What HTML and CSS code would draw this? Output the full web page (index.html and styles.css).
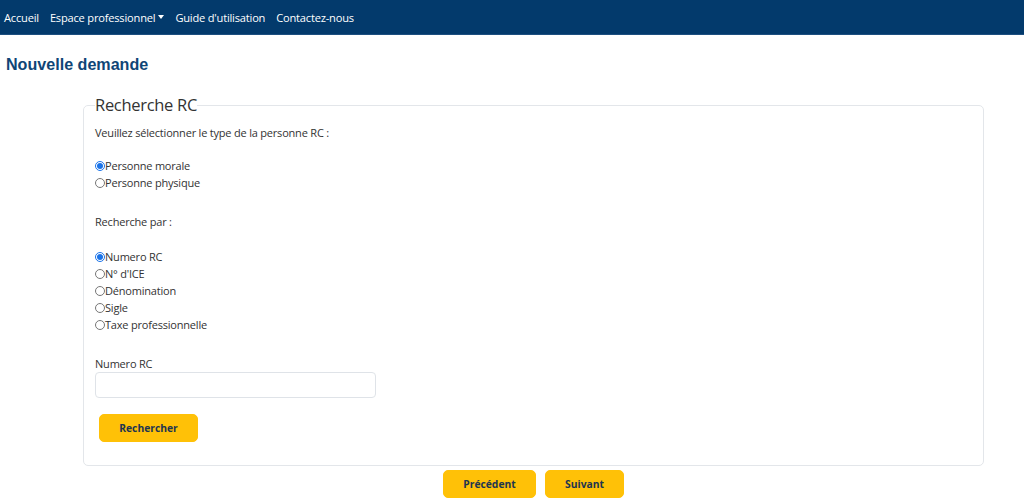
FILE: index.html
```html
<!DOCTYPE html>
<html lang="fr">
<head>
<meta charset="utf-8">
<title>Nouvelle demande</title>
<link rel="stylesheet" href="styles.css">
</head>
<body>
<nav class="navbar">
  <a class="nav-link" href="#">Accueil</a>
  <a class="nav-link" href="#">Espace professionnel<span class="caret"></span></a>
  <a class="nav-link" href="#">Guide d'utilisation</a>
  <a class="nav-link" href="#">Contactez-nous</a>
</nav>
<h1 class="page-title">Nouvelle demande</h1>
<main class="content">
  <fieldset class="box">
    <legend class="box-legend">Recherche RC</legend>
    <p class="intro">Veuillez sélectionner le type de la personne RC :</p>
    <div class="radio-group first">
      <label class="radio"><input type="radio" name="type" checked>Personne morale</label>
      <label class="radio"><input type="radio" name="type">Personne physique</label>
    </div>
    <p class="intro second">Recherche par :</p>
    <div class="radio-group">
      <label class="radio"><input type="radio" name="by" checked>Numero RC</label>
      <label class="radio"><input type="radio" name="by">N° d'ICE</label>
      <label class="radio"><input type="radio" name="by">Dénomination</label>
      <label class="radio"><input type="radio" name="by">Sigle</label>
      <label class="radio"><input type="radio" name="by">Taxe professionnelle</label>
    </div>
    <div class="field">
      <label class="field-label">Numero RC</label>
      <input class="field-input" type="text">
    </div>
    <button class="btn btn-search">Rechercher</button>
  </fieldset>
  <div class="actions">
    <button class="btn btn-prev">Précédent</button>
    <button class="btn btn-next">Suivant</button>
  </div>
</main>
</body>
</html>
```
FILE: styles.css
```css
* { box-sizing: border-box; }
body {
  margin: 0;
  font-family: "Open Sans", "Noto Sans", sans-serif;
  color: #333;
  background: #fff;
}
.navbar {
  height: 35px;
  background: #033a6c;
  display: flex;
  align-items: center;
  padding-left: 4px;
  gap: 11px;
  border-bottom: 1px solid #1d4f80;
}
.nav-link {
  color: #fff;
  text-decoration: none;
  font-size: 11.1px;
  letter-spacing: -0.2px;
  display: flex;
  align-items: center;
}
.caret {
  display: inline-block;
  width: 0;
  height: 0;
  border-left: 3.5px solid transparent;
  border-right: 3.5px solid transparent;
  border-top: 4px solid #fff;
  margin-left: 3px;
}
.page-title {
  margin: 19px 0 0 6px;
  font-family: "Liberation Sans", Arial, sans-serif;
  font-size: 16.1px;
  font-weight: bold;
  color: #0f4576;
  line-height: 20px;
}
.content {
  padding: 0 40px 0 83px;
}
.box {
  margin: 20px 0 0 0;
  border: 1px solid #e3e6ea;
  border-radius: 5px;
  padding: 0 11px 23px 11px;
  min-width: 0;
}
.box-legend {
  font-size: 16.5px;
  font-weight: normal;
  padding: 0;
  color: #333;
  line-height: 22px;
  letter-spacing: -0.3px;
}
.intro {
  font-size: 11px;
  margin: 9px 0 0 0;
  line-height: 16px;
  letter-spacing: -0.2px;
}
.intro.second { margin-top: 23px; }
.radio-group {
  margin-top: 18px;
  display: flex;
  flex-direction: column;
}
.radio-group.first { margin-top: 16px; }
.radio {
  font-size: 11px;
  line-height: 17px;
  letter-spacing: -0.2px;
  display: flex;
  align-items: center;
}
.radio input {
  margin: 0;
  width: 10px;
  height: 10px;
  accent-color: #1a73e8;
}
.field {
  margin-top: 23px;
  display: flex;
  flex-direction: column;
}
.field-label {
  font-size: 11px;
  line-height: 16px;
  letter-spacing: -0.2px;
  margin-bottom: 0;
}
.field-input {
  width: 281px;
  height: 26px;
  border: 1px solid #dfe3e8;
  border-radius: 4px;
  outline: none;
}
.btn {
  background: #ffc107;
  border: 1px solid #ffc107;
  border-radius: 5px;
  color: #1e3550;
  font-family: "Open Sans", "Noto Sans", sans-serif;
  font-weight: bold;
  font-size: 10.3px;
  height: 28px;
  cursor: pointer;
}
.btn-search {
  width: 99px;
  margin: 16px 0 0 4px;
}
.actions {
  display: flex;
  justify-content: center;
  gap: 9px;
  margin: 4px 0 0 0;
}
.btn-prev { width: 93px; }
.btn-next { width: 79px; }
```
